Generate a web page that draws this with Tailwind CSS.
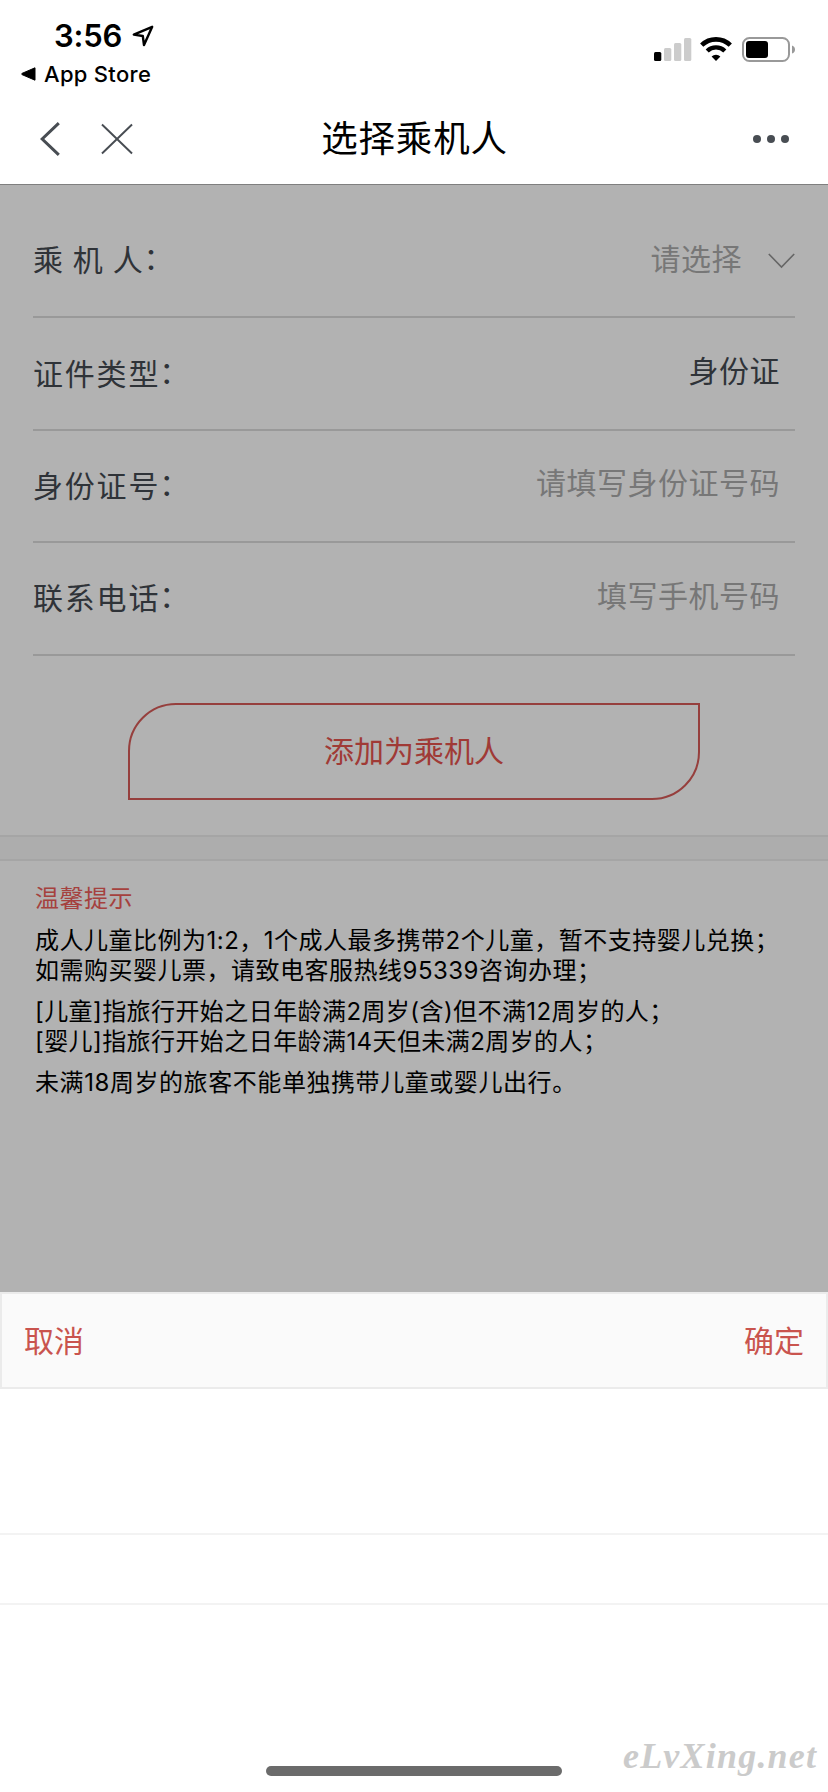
<!DOCTYPE html>
<html lang="zh-CN">
<head>
<meta charset="utf-8">
<title>选择乘机人</title>
<script src="https://cdn.jsdelivr.net/npm/@tailwindcss/browser@4"></script>
</head>
<body class="w-[828px] h-[1792px] overflow-hidden bg-white font-['Inter','Noto_Sans_CJK_SC',sans-serif] text-black">
<div class="relative flex flex-col h-[1792px]">
  <!-- Status bar -->
  <div class="flex h-24 justify-between">
    <div class="flex flex-col pl-[21px]">
      <div class="flex items-center gap-[10px] pl-[33px] pt-[18px] h-[54px]">
        <span class="text-[31px] leading-9 font-semibold tracking-[-0.2px]">3:56</span>
        <svg class="w-[22px] h-[22px]" viewBox="0 0 22 22" fill="none" stroke="#000" stroke-width="2.4" stroke-linejoin="round"><path d="M20.2 1.8 L1.8 9.6 L10.8 11 L12 20 Z"/></svg>
      </div>
      <div class="flex items-center gap-2 h-[42px] pb-[2px]">
        <svg class="w-[15px] h-[14px]" viewBox="0 0 15 14"><path d="M14 0.8 V13.2 L1 7.6 Q0 7 1 6.4 Z" fill="#000" stroke="#000" stroke-linejoin="round"/></svg>
        <span class="text-[22px] leading-7 font-medium tracking-[0.3px]">App Store</span>
      </div>
    </div>
    <div class="flex items-start pt-[37px] pr-8">
      <svg class="w-[38px] h-[25px]" viewBox="0 0 38 25"><rect x="0" y="15" width="7.3" height="9" rx="1.5"/><g fill="#ccc"><rect x="10" y="11" width="7.3" height="13" rx="1.5"/><rect x="20" y="6" width="7.3" height="18" rx="1.5"/><rect x="30" y="1" width="7.3" height="23" rx="1.5"/></g></svg>
      <svg class="w-[32px] h-[25px] ml-2" viewBox="0 0 32 25" fill="none" stroke="#000"><path d="M1.7 8.2 A20.5 20.5 0 0 1 30.3 8.2" stroke-width="4.6"/><path d="M7.2 14 A12.6 12.6 0 0 1 24.8 14" stroke-width="4.4"/><path d="M16 24 L11.6 19.6 A6.3 6.3 0 0 1 20.4 19.6 Z" fill="#000" stroke="none"/></svg>
      <svg class="w-[54px] h-[25px] ml-[10px]" viewBox="0 0 54 25"><rect x="1" y="1" width="46" height="23" rx="6.5" fill="none" stroke="#999" stroke-width="2"/><rect x="4" y="4" width="22" height="17" rx="3"/><path d="M50 8.5 Q53 9.5 53 12.5 Q53 15.5 50 16.5 Z" fill="#999"/></svg>
    </div>
  </div>

  <!-- Navigation bar -->
  <div class="flex items-center justify-between h-[89px] pb-[3px] pl-[40px] pr-[39px] border-b border-[#7f7f7f]">
    <div class="flex items-center gap-[41px] w-[190px]">
      <svg class="w-5 h-[34px]" viewBox="0 0 20 34" fill="none" stroke="#484d53" stroke-width="3"><path d="M18.8 1.2 L2.2 17 L18.8 32.8"/></svg>
      <svg class="w-[32px] h-[32px]" viewBox="0 0 33 32" fill="none" stroke="#484d53" stroke-width="2"><path d="M1 1 L32 31 M32 1 L1 31"/></svg>
    </div>
    <h1 class="pt-px text-[36.5px] leading-[52px] tracking-[0.8px]">选择乘机人</h1>
    <div class="flex gap-[6px] w-[190px] justify-end"><i class="size-2 rounded-full bg-[#484d53]"></i><i class="size-2 rounded-full bg-[#484d53]"></i><i class="size-2 rounded-full bg-[#484d53]"></i></div>
  </div>

  <!-- Dimmed passenger form -->
  <main class="flex flex-col h-[1107px] bg-[#b2b2b2]">
    <div class="mx-[33px] text-[30px] text-[#2f3338]">
      <div class="flex items-center justify-between h-[133px] pt-[20px] border-b-2 border-[#999]">
        <span class="flex tracking-[1.8px]"><span class="mr-2">乘</span><span class="mr-2">机</span><span>人</span><span class="-mt-[2px] -ml-px">：</span></span>
        <span class="flex items-center gap-[26px] text-[#777]"><span class="tracking-[0.5px] pb-[3px]">请选择</span><svg class="w-[27px] h-[16px]" viewBox="0 0 27 16" fill="none" stroke="#666" stroke-width="1.6"><path d="M0.8 1 L13.5 14 L26.2 1"/></svg></span>
      </div>
      <div class="flex items-center justify-between h-[113px] border-b-2 border-[#999]">
        <span class="flex pt-[2px] tracking-[1.8px]">证件类型<span class="-mt-[2px] -ml-px">：</span></span><span class="tracking-[0.5px] pr-[15px] pb-[4px]">身份证</span>
      </div>
      <div class="flex items-center justify-between h-[112px] border-b-2 border-[#999]">
        <span class="flex tracking-[1.8px]">身份证号<span class="-mt-[2px] -ml-px">：</span></span><span class="tracking-[0.5px] pr-[15px] pb-[5px] text-[#777]">请填写身份证号码</span>
      </div>
      <div class="flex items-center justify-between h-[113px] border-b-2 border-[#999]">
        <span class="flex tracking-[1.8px]">联系电话<span class="-mt-[2px] -ml-px">：</span></span><span class="tracking-[0.5px] pr-[15px] pb-[5px] text-[#777]">填写手机号码</span>
      </div>
    </div>
    <button class="flex items-center justify-center w-[572px] h-[97px] pb-px mt-[47px] mx-auto border-2 border-[#963f3d] rounded-tl-[48px] rounded-br-[48px] text-[30px] text-[#a03a36]">添加为乘机人</button>
    <div class="h-[26px] mt-[35px] border-y-2 border-[#a5a5a5] bg-[#adadad]"></div>
    <section class="pl-[35px] pt-[20px] text-[24px] leading-[30px] tracking-[0.5px]">
      <h2 class="h-9 leading-9 text-[#a5413e]">温馨提示</h2>
      <p class="mt-[9px] whitespace-nowrap">成人儿童比例为1:2，1个成人最多携带2个儿童，暂不支持婴儿兑换；<br>如需购买婴儿票，请致电客服热线95339咨询办理；</p>
      <p class="mt-[11px] whitespace-nowrap tracking-[0.42px]">[儿童]指旅行开始之日年龄满2周岁(含)但不满12周岁的人；<br>[婴儿]指旅行开始之日年龄满14天但未满2周岁的人；</p>
      <p class="mt-[11px] whitespace-nowrap tracking-[0.57px]">未满18周岁的旅客不能单独携带儿童或婴儿出行。</p>
    </section>
  </main>

  <!-- Picker sheet -->
  <div class="flex items-center justify-between h-[97px] pt-[2px] px-[22px] border-2 border-[#ebebeb] bg-[#fafafa] text-[30px] text-[#c9544e]"><span>取消</span><span>确定</span></div>
  <div class="flex flex-col grow bg-white pt-[144px]">
    <div class="h-[72px] border-y-2 border-[#f3f3f3]"></div>
    <div class="grow"></div>
    <div class="w-[296px] h-[10px] mb-4 mx-auto rounded-full bg-[#6b6b6b]"></div>
  </div>
  <div class="absolute left-[623px] top-[1734px] text-[36px] leading-[44px] italic font-bold font-['Liberation_Serif',serif] text-[#cbcbcb] tracking-[1.2px] whitespace-nowrap">eLvXing.net</div>
</div>
</body>
</html>
